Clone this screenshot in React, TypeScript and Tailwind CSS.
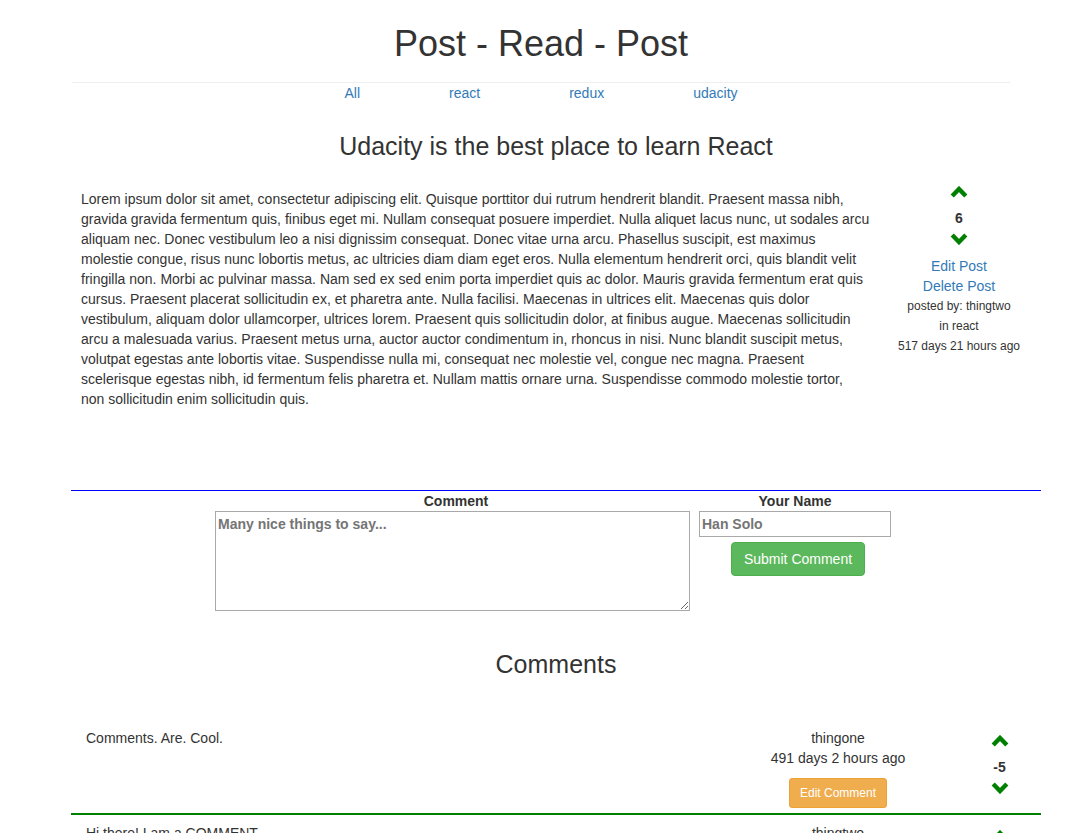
const font = { fontFamily: '"Liberation Sans", Arial, Helvetica, sans-serif' };

const body =
  "Lorem ipsum dolor sit amet, consectetur adipiscing elit. Quisque porttitor dui rutrum hendrerit blandit. Praesent massa nibh, gravida gravida fermentum quis, finibus eget mi. Nullam consequat posuere imperdiet. Nulla aliquet lacus nunc, ut sodales arcu aliquam nec. Donec vestibulum leo a nisi dignissim consequat. Donec vitae urna arcu. Phasellus suscipit, est maximus molestie congue, risus nunc lobortis metus, ac ultricies diam diam eget eros. Nulla elementum hendrerit orci, quis blandit velit fringilla non. Morbi ac pulvinar massa. Nam sed ex sed enim porta imperdiet quis ac dolor. Mauris gravida fermentum erat quis cursus. Praesent placerat sollicitudin ex, et pharetra ante. Nulla facilisi. Maecenas in ultrices elit. Maecenas quis dolor vestibulum, aliquam dolor ullamcorper, ultrices lorem. Praesent quis sollicitudin dolor, at finibus augue. Maecenas sollicitudin arcu a malesuada varius. Praesent metus urna, auctor auctor condimentum in, rhoncus in nisi. Nunc blandit suscipit metus, volutpat egestas ante lobortis vitae. Suspendisse nulla mi, consequat nec molestie vel, congue nec magna. Praesent scelerisque egestas nibh, id fermentum felis pharetra et. Nullam mattis ornare urna. Suspendisse commodo molestie tortor, non sollicitudin enim sollicitudin quis.";

function Chevron({ up }: { up?: boolean }) {
  return (
    <svg width="18" height="12" viewBox="0 0 18 12" className="block">
      <polyline
        points={up ? "2.2,10 9,3 15.8,10" : "2.2,2 9,9 15.8,2"}
        fill="none"
        stroke="#008000"
        strokeWidth="4.4"
      />
    </svg>
  );
}

function Vote({ score }: { score: number }) {
  return (
    <div className="flex flex-col items-center">
      <Chevron up />
      <div className="mt-[10px] text-[14px] font-bold leading-[20px]">{score}</div>
      <div className="mt-[5px]">
        <Chevron />
      </div>
    </div>
  );
}

const comments = [
  { body: "Comments. Are. Cool.", author: "thingone", time: "491 days 2 hours ago", score: -5 },
  { body: "Hi there! I am a COMMENT.", author: "thingtwo", time: "491 days 2 hours ago", score: 6 },
];

export default function App() {
  return (
    <div className="min-h-screen bg-white text-[#333] text-[14px] leading-[20px]" style={font}>
      <div className="ml-[72px] w-[938px]">
        <h1 className="pt-[24px] text-center text-[36px] leading-[40px]">Post - Read - Post</h1>
        <hr className="mt-[18px] border-t border-[#eee]" />
        <nav className="flex justify-center gap-[89px] text-[#337ab7]">
          <a href="#">All</a>
          <a href="#">react</a>
          <a href="#">redux</a>
          <a href="#">udacity</a>
        </nav>
      </div>

      <div className="ml-[71px] w-[970px]">
        <h2 className="mt-[30px] text-center text-[25px] leading-[26px]">
          Udacity is the best place to learn React
        </h2>

        <div className="mt-[30px] flex">
          <p className="ml-[10px] w-[789px]">{body}</p>
          <div className="-mt-[3px] ml-[9px] flex w-[160px] flex-col items-center">
            <Vote score={6} />
            <a href="#" className="mt-[11px] text-[#337ab7]">Edit Post</a>
            <a href="#" className="text-[#337ab7]">Delete Post</a>
            <div className="text-[12px] leading-[20px]">posted by: thingtwo</div>
            <div className="text-[12px] leading-[20px]">in react</div>
            <div className="text-[12px] leading-[20px]">517 days 21 hours ago</div>
          </div>
        </div>

        <div className="mt-[81px] h-[1px] bg-[blue]" />
        <form className="flex pl-[144px]">
          <div className="flex w-[482px] flex-col">
            <label className="text-center font-bold">Comment</label>
            <textarea
              placeholder="Many nice things to say..."
              className="h-[100px] w-[475px] border border-[#a9a9a9] px-[2px] py-[2px] font-bold placeholder:text-[#757575]"
              style={font}
            />
          </div>
          <div className="flex w-[196px] flex-col items-center">
            <label className="font-bold">Your Name</label>
            <input
              placeholder="Han Solo"
              className="h-[26px] w-[192px] border border-[#a9a9a9] px-[2px] font-bold placeholder:text-[#757575]"
              style={font}
            />
            <button
              type="button"
              className="ml-[6px] mt-[5px] rounded-[4px] border border-[#4cae4c] bg-[#5cb85c] px-[12px] py-[6px] text-white"
            >
              Submit Comment
            </button>
          </div>
        </form>

        <h2 className="mt-[40px] text-center text-[25px] leading-[26px]">Comments</h2>

        <div className="mt-[43px]">
          {comments.map((c) => (
            <div key={c.author} className="flex border-b-2 border-[#008000] pt-[8px]">
              <div className="w-[667px] pl-[15px]">{c.body}</div>
              <div className="flex w-[200px] flex-col items-center">
                <div>{c.author}</div>
                <div>{c.time}</div>
                <button
                  type="button"
                  className="mt-[10px] mb-[5px] rounded-[3px] border border-[#eea236] bg-[#f0ad4e] px-[10px] py-[5px] text-[12px] leading-[18px] text-white"
                >
                  Edit Comment
                </button>
              </div>
              <div className="ml-[20px] flex w-[83px] justify-center pt-[7px]">
                <Vote score={c.score} />
              </div>
            </div>
          ))}
        </div>
      </div>
    </div>
  );
}
